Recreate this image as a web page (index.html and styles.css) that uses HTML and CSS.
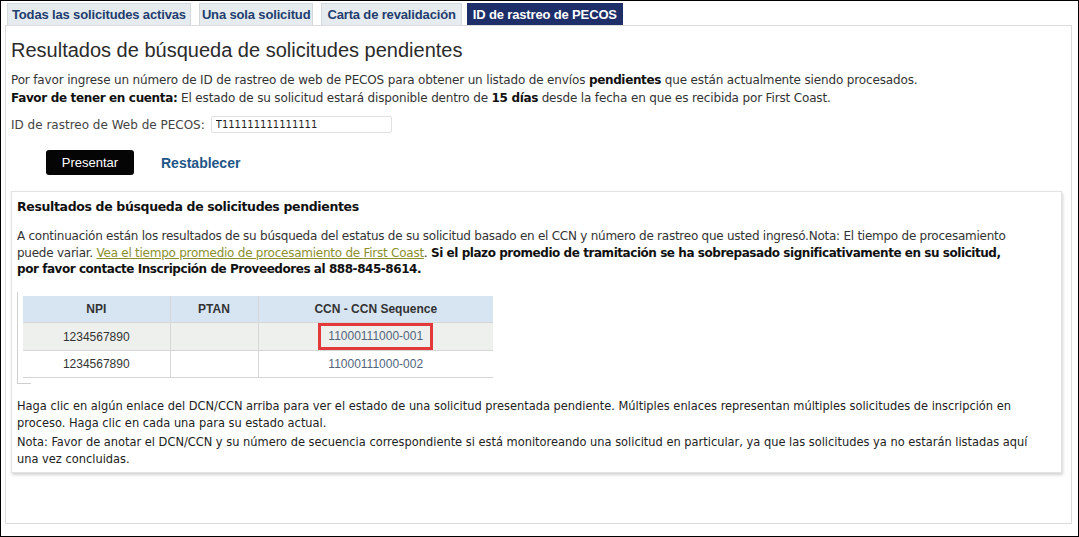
FILE: index.html
```html
<!DOCTYPE html>
<html lang="es">
<head>
<meta charset="utf-8">
<title>ID de rastreo de PECOS</title>
<link rel="stylesheet" href="styles.css">
</head>
<body>
<div class="frame">
  <ul class="tabs">
    <li class="tab">Todas las solicitudes activas</li>
    <li class="tab">Una sola solicitud</li>
    <li class="tab">Carta de revalidación</li>
    <li class="tab active">ID de rastreo de PECOS</li>
  </ul>
  <div class="panel">
    <h1 class="title">Resultados de búsqueda de solicitudes pendientes</h1>
    <p class="intro">Por favor ingrese un número de ID de rastreo de web de PECOS para obtener un listado de envíos <b>pendientes</b> que están actualmente siendo procesados.<br><b>Favor de tener en cuenta:</b> El estado de su solicitud estará disponible dentro de <b>15 días</b> desde la fecha en que es recibida por First Coast.</p>
    <div class="field">
      <label class="label">ID de rastreo de Web de PECOS:</label>
      <input class="input" type="text" value="T111111111111111">
    </div>
    <div class="actions">
      <button class="btn">Presentar</button>
      <a class="reset">Restablecer</a>
    </div>
    <div class="card">
      <h2 class="card-title">Resultados de búsqueda de solicitudes pendientes</h2>
      <p class="card-text">A continuación están los resultados de su búsqueda del estatus de su solicitud basado en el CCN y número de rastreo que usted ingresó.Nota: El tiempo de procesamiento puede variar. <a class="olive">Vea el tiempo promedio de procesamiento de First Coast</a>. <b>Si el plazo promedio de tramitación se ha sobrepasado significativamente en su solicitud, por favor contacte Inscripción de Proveedores al 888-845-8614.</b></p>
      <div class="table-wrap">
        <table class="results">
          <thead>
            <tr><th class="c-npi">NPI</th><th class="c-ptan">PTAN</th><th class="c-ccn">CCN - CCN Sequence</th></tr>
          </thead>
          <tbody>
            <tr class="alt"><td>1234567890</td><td></td><td><span class="ccn boxed">11000111000-001</span></td></tr>
            <tr><td>1234567890</td><td></td><td><span class="ccn">11000111000-002</span></td></tr>
          </tbody>
        </table>
      </div>
      <p class="note">Haga clic en algún enlace del DCN/CCN arriba para ver el estado de una solicitud presentada pendiente. Múltiples enlaces representan múltiples solicitudes de inscripción en proceso. Haga clic en cada una para su estado actual.</p>
      <p class="note">Nota: Favor de anotar el DCN/CCN y su número de secuencia correspondiente si está monitoreando una solicitud en particular, ya que las solicitudes ya no estarán listadas aquí una vez concluidas.</p>
    </div>
  </div>
</div>
</body>
</html>
```

FILE: styles.css
```css
* { box-sizing: border-box; }
html, body { margin: 0; padding: 0; background: #fff; }
body { font-family: "DejaVu Sans", "Noto Sans", sans-serif; color: #222; }

.frame {
  width: 1079px;
  height: 537px;
  border: 1px solid #000;
  padding: 2px 6px 12px 4px;
  display: flex;
  flex-direction: column;
}

.tabs {
  list-style: none;
  margin: 0;
  padding: 0 0 0 2px;
  display: flex;
  gap: 8px;
  height: 22px;
  position: relative;
  z-index: 1;
}
.tab {
  height: 22px;
  padding: 0 4px;
  background: #e6ebef;
  border: 1px solid #d3d9df;
  border-bottom: none;
  font-family: "Liberation Sans", Arial, sans-serif;
  font-weight: bold;
  font-size: 13px;
  letter-spacing: -0.15px;
  line-height: 21px;
  color: #223d6e;
  white-space: nowrap;
}
.tab:nth-child(2) { padding: 0 2px; }
.tab:nth-child(3) { padding: 0 5px; }
.tab.active {
  background: #1d2e68;
  border-color: #1d2e68;
  color: #fff;
  margin-left: -3px;
  padding: 0 5px;
}

.panel {
  flex: 1;
  border: 1px solid #dcdcdc;
  padding: 0 8px 0 5px;
}

.title {
  margin: 13px 0 0;
  font-family: "Liberation Sans", Arial, sans-serif;
  font-weight: normal;
  font-size: 20px;
  line-height: 22px;
  color: #2b2b2b;
}

.intro {
  margin: 10px 0 0;
  font-size: 12px;
  letter-spacing: -0.15px;
  line-height: 18px;
  color: #333;
}
.intro b { color: #111; letter-spacing: -0.35px; }

.field {
  margin-top: 9px;
  display: flex;
  align-items: center;
  gap: 6px;
}
.label {
  font-size: 12px;
  color: #444;
}
.input {
  width: 181px;
  height: 17px;
  border: 1px solid #e0e0e0;
  border-radius: 2px;
  padding: 0 4px;
  font-family: "DejaVu Sans", sans-serif;
  font-size: 10px;
  color: #222;
  background: #fff;
}

.actions {
  margin-top: 17px;
  display: flex;
  align-items: center;
  padding-left: 35px;
  gap: 27px;
}
.btn {
  width: 88px;
  height: 25px;
  background: #050505;
  border: none;
  border-radius: 3px;
  color: #fff;
  font-family: "Liberation Sans", Arial, sans-serif;
  font-size: 13px;
  padding: 0;
}
.reset {
  font-family: "Liberation Sans", Arial, sans-serif;
  font-weight: bold;
  font-size: 14px;
  color: #1f5687;
}

.card {
  margin-top: 16px;
  margin-left: 0;
  margin-right: 1px;
  border: 1px solid #e3e3e3;
  box-shadow: 1px 2px 3px rgba(0,0,0,0.18);
  padding: 6px 22px 5px 5px;
}
.card-title {
  margin: 0;
  font-size: 12.5px;
  letter-spacing: -0.35px;
  font-weight: bold;
  line-height: 18px;
  color: #111;
}
.card-text {
  margin: 12px 24px 0 0;
  font-size: 12px;
  letter-spacing: -0.25px;
  line-height: 16.5px;
  color: #333;
}
.card-text b { color: #111; letter-spacing: -0.45px; }
.olive {
  color: #8c8f2c;
  text-decoration: underline;
}

.table-wrap {
  margin-top: 14px;
  margin-left: 0;
  width: 476px;
  padding: 4px 0 6px 5px;
  border-left: 1px solid #cfcfcf;
  position: relative;
}
.table-wrap::after {
  content: "";
  position: absolute;
  left: 0;
  bottom: 0;
  width: 13px;
  border-bottom: 1px solid #cfcfcf;
}
.results {
  border-collapse: collapse;
  width: 470px;
  font-family: "Liberation Sans", Arial, sans-serif;
  font-size: 12px;
  color: #333;
}
.results th, .results td {
  height: 27px;
  border-right: 1px solid #d6d6d6;
  border-bottom: 1px solid #d6d6d6;
  text-align: center;
  padding: 0;
}
.results th:last-child, .results td:last-child { border-right: none; }
.results th {
  background: #d7e5f3;
  font-weight: bold;
  color: #333;
}
.c-npi { width: 147px; }
.c-ptan { width: 88px; }
.results tr.alt td { background: #eef0ee; }
.ccn { color: #52657d; display: inline-block; }
.ccn.boxed {
  border: 3px solid #e23a3a;
  padding: 3px 7px 4px;
}

.note {
  margin: 0;
  font-family: "DejaVu Sans Condensed", "DejaVu Sans", sans-serif;
  font-size: 12.7px;
  line-height: 17px;
  color: #222;
}
.table-wrap + .note { margin-top: 13px; }
.note + .note { margin-top: 2px; }
```
